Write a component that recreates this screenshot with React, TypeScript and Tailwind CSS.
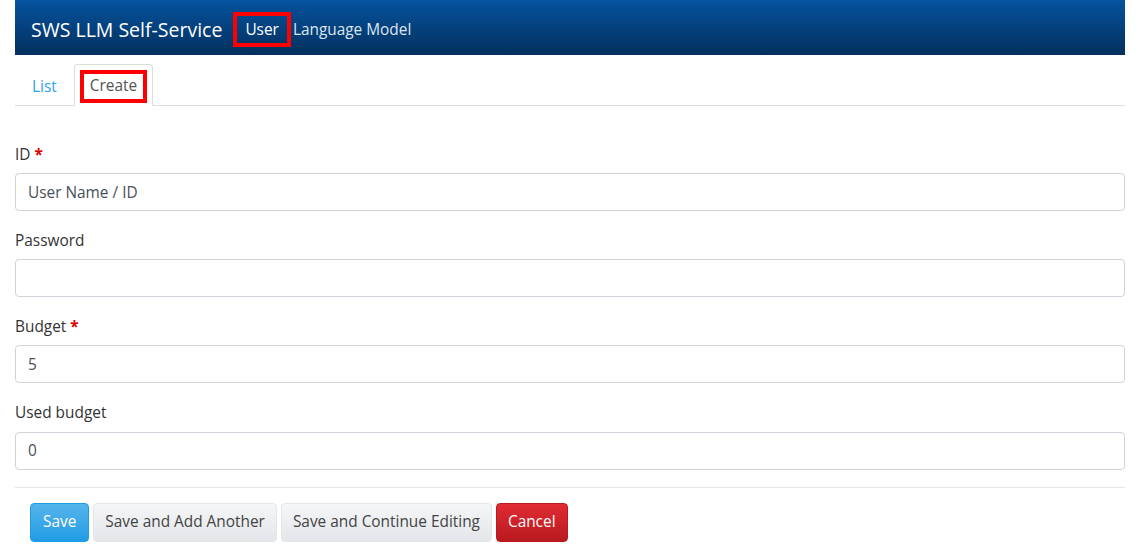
import { useState } from 'react';

const fields = [
  { id: 'id', label: 'ID', required: true, value: '', placeholder: 'User Name / ID' },
  { id: 'password', label: 'Password', required: false, value: '', placeholder: '' },
  { id: 'budget', label: 'Budget', required: true, value: '5', placeholder: '' },
  { id: 'used_budget', label: 'Used budget', required: false, value: '0', placeholder: '' },
];

export default function App() {
  const [values, setValues] = useState<Record<string, string>>(
    Object.fromEntries(fields.map((f) => [f.id, f.value]))
  );

  return (
    <div className="min-h-screen bg-white px-[15px] text-[15.4px] text-[#333] font-['Open_Sans',sans-serif]">
      {/* Navbar */}
      <nav className="flex h-[55px] items-center bg-gradient-to-b from-[#05539f] to-[#03305e] pl-4 pt-[4px]">
        <span className="mr-[11px] text-[19.5px] text-white">SWS LLM Self-Service</span>
        <span className="border-4 border-[#ff0000] px-2 py-[2px] text-white">User</span>
        <span className="ml-[2px] text-[#dde6f0]">Language Model</span>
      </nav>

      {/* Tabs */}
      <div className="mt-[9px] flex border-b border-[#dddddd]">
        <a className="px-[17px] pt-[11px] pb-[7px] text-[#2fa4e7]">List</a>
        <div className="-mb-px flex rounded-t border border-[#dddddd] border-b-white bg-white px-[5px] pt-[5px] pb-[2px]">
          <span className="block border-4 border-[#ff0000] px-[6px] leading-[24px] text-[#555]">Create</span>
        </div>
      </div>

      {/* Form */}
      <form className="pt-[37px]">
        {fields.map((f) => (
          <div key={f.id} className="mb-[18px]">
            <label className="mb-[7px] block">
              {f.label}
              {f.required && <span className="ml-1 font-bold text-[#dd0000]">*</span>}
            </label>
            <input
              type={f.id === 'password' ? 'password' : 'text'}
              value={values[f.id]}
              placeholder={f.placeholder}
              onChange={(e) => setValues({ ...values, [f.id]: e.target.value })}
              className="block h-[38px] w-full rounded border border-[#cfd4da] px-3 text-[#495057] placeholder:text-[#495057] outline-none"
            />
          </div>
        ))}

        <div className="mt-[-1px] border-t border-[#e5e5e5] px-[15px] pt-[15px]">
          <div className="flex gap-[4px]">
            <button type="button" className="h-[39px] rounded border border-[#1d9ce5] bg-gradient-to-b from-[#54b4eb] to-[#1d9ce5] px-3 text-white">
              Save
            </button>
            <button type="button" className="h-[39px] rounded border border-[#e3e6ea] bg-gradient-to-b from-[#f5f6f7] to-[#e3e6ea] px-[11px] text-[#444]">
              Save and Add Another
            </button>
            <button type="button" className="h-[39px] rounded border border-[#e3e6ea] bg-gradient-to-b from-[#f5f6f7] to-[#e3e6ea] px-[11px] text-[#444]">
              Save and Continue Editing
            </button>
            <button type="button" className="h-[39px] rounded border border-[#b81a20] bg-gradient-to-b from-[#e12b33] to-[#b81a20] px-[11px] text-white">
              Cancel
            </button>
          </div>
        </div>
      </form>
    </div>
  );
}
